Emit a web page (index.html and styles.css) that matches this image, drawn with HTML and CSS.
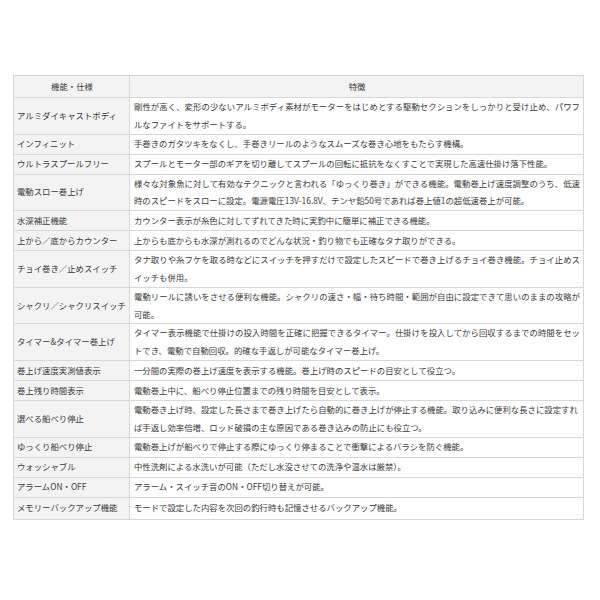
FILE: index.html
```html
<!DOCTYPE html>
<html lang="ja">
<head>
<meta charset="utf-8">
<link rel="stylesheet" href="styles.css">
</head>
<body>
<div class="page">
<table class="spec">
<thead>
<tr><th class="c1">機能・仕様</th><th class="c2">特徴</th></tr>
</thead>
<tbody>
<tr class="two"><th>アルミダイキャストボディ</th><td>剛性が高く、変形の少ないアルミボディ素材がモーターをはじめとする駆動セクションをしっかりと受け止め、パワフルなファイトをサポートする。</td></tr>
<tr><th>インフィニット</th><td>手巻きのガタツキをなくし、手巻きリールのようなスムーズな巻き心地をもたらす機構。</td></tr>
<tr><th>ウルトラスプールフリー</th><td>スプールとモーター部のギアを切り離してスプールの回転に抵抗をなくすことで実現した高速仕掛け落下性能。</td></tr>
<tr class="two"><th>電動スロー巻上げ</th><td>様々な対象魚に対して有効なテクニックと言われる「ゆっくり巻き」ができる機能。電動巻上げ速度調整のうち、低速時のスピードをスローに設定。電源電圧13V-16.8V、テンヤ鉛50号であれば巻上値1の超低速巻上が可能。</td></tr>
<tr><th>水深補正機能</th><td>カウンター表示が糸色に対してずれてきた時に実釣中に簡単に補正できる機能。</td></tr>
<tr><th>上から／底からカウンター</th><td>上からも底からも水深が測れるのでどんな状況・釣り物でも正確なタナ取りができる。</td></tr>
<tr class="two"><th>チョイ巻き／止めスイッチ</th><td>タナ取りや糸フケを取る時などにスイッチを押すだけで設定したスピードで巻き上げるチョイ巻き機能。チョイ止めスイッチも併用。</td></tr>
<tr class="two"><th>シャクリ／シャクリスイッチ</th><td>電動リールに誘いをさせる便利な機能。シャクリの速さ・幅・待ち時間・範囲が自由に設定できて思いのままの攻略が可能。</td></tr>
<tr class="two"><th>タイマー&amp;タイマー巻上げ</th><td>タイマー表示機能で仕掛けの投入時間を正確に把握できるタイマー。仕掛けを投入してから回収するまでの時間をセットでき、電動で自動回収。的確な手返しが可能なタイマー巻上げ。</td></tr>
<tr><th>巻上げ速度実測値表示</th><td>一分間の実際の巻上げ速度を表示する機能。巻上げ時のスピードの目安として役立つ。</td></tr>
<tr><th>巻上残り時間表示</th><td>電動巻上中に、船べり停止位置までの残り時間を目安として表示。</td></tr>
<tr class="two"><th>選べる船べり停止</th><td>電動巻き上げ時、設定した長さまで巻き上げたら自動的に巻き上げが停止する機能。取り込みに便利な長さに設定すれ<br>ば手返し効率倍増、ロッド破損の主な原因である巻き込みの防止にも役立つ。</td></tr>
<tr><th>ゆっくり船べり停止</th><td>電動巻上げが船べりで停止する際にゆっくり停まることで衝撃によるバラシを防ぐ機能。</td></tr>
<tr><th>ウォッシャブル</th><td>中性洗剤による水洗いが可能（ただし水没させての洗浄や温水は厳禁）。</td></tr>
<tr><th>アラームON・OFF</th><td>アラーム・スイッチ音のON・OFF切り替えが可能。</td></tr>
<tr class="last"><th>メモリーバックアップ機能</th><td>モードで設定した内容を次回の釣行時も記憶させるバックアップ機能。</td></tr>
</tbody>
</table>
</div>
</body>
</html>
```
FILE: styles.css
```css
html, body {
  margin: 0;
  padding: 0;
  background: #fff;
}
.page {
  padding: 75px 0 0 13px;
}
.spec {
  width: 571px;
  border-collapse: collapse;
  table-layout: fixed;
  font-family: "Noto Sans CJK JP", "Noto Sans", sans-serif;
  font-size: 8.4px;
  color: #3a3a3a;
  line-height: 17.8px;
}
.spec th, .spec td {
  border: 1px solid #d8d8d8;
  padding: 0 3px 0 4px;
  text-align: left;
  vertical-align: middle;
  font-weight: normal;
}
.spec td {
  text-align: justify;
}
.spec thead th {
  background: #f3f3f3;
  text-align: center;
  height: 21px;
}
.spec .c1 { width: 108px; }
.spec tbody th {
  background: #f3f3f3;
  height: 19px;
  padding-left: 3px;
}
.spec tr.last th { height: 21px; }
```
